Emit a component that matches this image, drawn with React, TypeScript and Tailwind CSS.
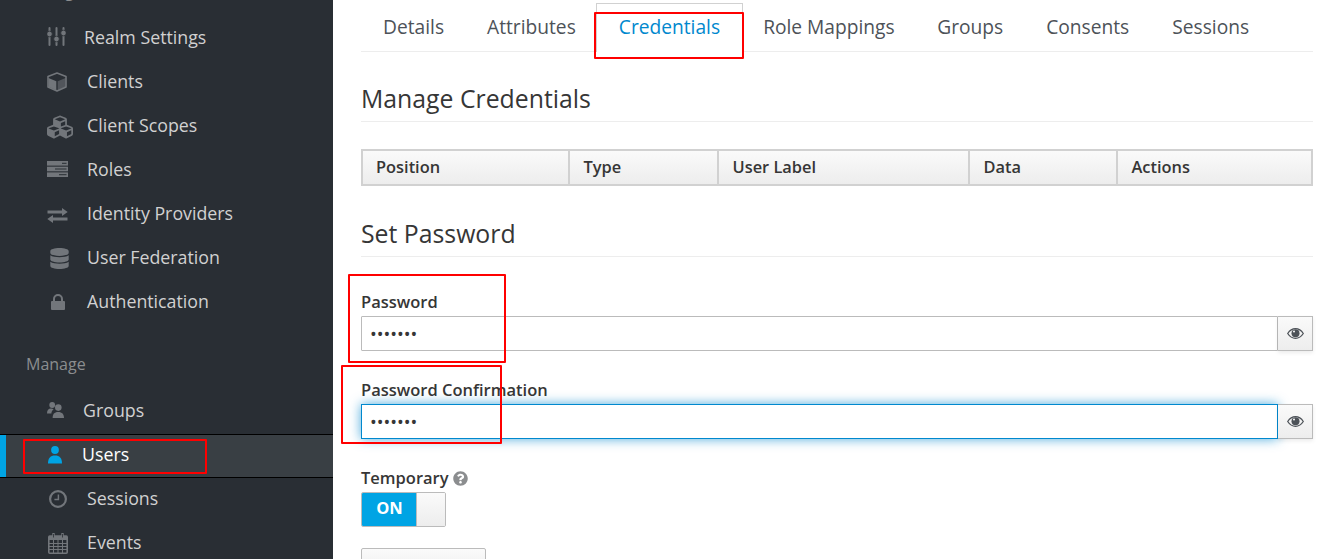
import React from "react";
import { FaCubes, FaDatabase, FaQuestionCircle } from "react-icons/fa";

const G = "#72767b";
const BG = "#292e34";

function SlidersIcon() {
  return (
    <svg width="19" height="19" viewBox="0 0 19 19" className="-mt-[1px]">
      <g stroke={G} strokeWidth="2" strokeLinecap="round">
        <line x1="2.5" y1="1" x2="2.5" y2="18" />
        <line x1="9.5" y1="1" x2="9.5" y2="18" />
        <line x1="16.5" y1="1" x2="16.5" y2="18" />
      </g>
      <g fill={G} stroke={BG} strokeWidth="0.8">
        <circle cx="2.5" cy="7" r="2.8" />
        <circle cx="9.5" cy="12" r="2.8" />
        <circle cx="16.5" cy="6" r="2.8" />
      </g>
    </svg>
  );
}

function CubeIcon() {
  return (
    <svg width="20" height="20" viewBox="0 0 20 20" className="mt-[1px]">
      <path d="M10 1 L19 4.5 V15 L10 19 L1 15 V4.5 Z" fill={BG} stroke={G} strokeWidth="1.6" strokeLinejoin="round" />
      <path d="M1.5 6 L9.3 9.2 V18.3 L1.5 14.7 Z" fill={G} />
      <path d="M10.7 9.2 L18.5 6 V14.7 L10.7 18.3 Z" fill={G} fillOpacity="0.55" />
    </svg>
  );
}

function RolesIcon() {
  return (
    <svg width="21" height="16" viewBox="0 0 21 16">
      <rect x="0" y="0" width="21" height="4.6" fill={G} />
      <rect x="0" y="5.7" width="21" height="4.6" fill={G} />
      <rect x="0" y="11.4" width="21" height="4.6" fill={G} />
      <rect x="15" y="1.8" width="4.5" height="1" fill={BG} />
      <rect x="8" y="7.5" width="11.5" height="1" fill={BG} />
      <rect x="12" y="13.2" width="7.5" height="1" fill={BG} />
    </svg>
  );
}

function ExchangeIcon() {
  return (
    <svg width="21" height="15" viewBox="0 0 21 15" className="mt-[5px]">
      <path d="M0.5 2.6 H15 V0 L20.7 4 L15 8 V5.4 H0.5 Z" fill={G} />
      <path d="M20.5 9.6 H6 V7 L0.3 11 L6 15 V12.4 H20.5 Z" fill={G} />
    </svg>
  );
}

function LockIcon() {
  return (
    <svg width="14" height="16" viewBox="0 0 14 16" className="mt-[2px]">
      <rect x="0" y="7" width="14" height="9" rx="1" fill={G} />
      <path d="M3 7.5 V5 a4 4 0 0 1 8 0 V7.5" fill="none" stroke={G} strokeWidth="2" />
    </svg>
  );
}

function GroupsIcon() {
  return (
    <svg width="17" height="16" viewBox="0 0 17 16">
      <circle cx="5.2" cy="3" r="2.9" fill={G} />
      <path d="M0 11.5 C0 8 1.5 6.5 4 6.5 C5 6.5 6 6.8 6.6 7.3 C5 8.6 4.5 10 4.4 11.5 Z" fill={G} />
      <circle cx="11.3" cy="5.6" r="3.3" fill={G} />
      <path d="M5.6 16 C5.6 12 7.2 9.9 11.2 9.9 C15.2 9.9 16.9 12 17 16 Z" fill={G} />
    </svg>
  );
}

function UserIcon() {
  return (
    <svg width="14" height="18" viewBox="0 0 14 18">
      <circle cx="7" cy="4" r="3.9" fill="#00a4e4" />
      <path d="M0 17.5 C0 12 2.5 9.5 7 9.5 C11.5 9.5 14 12 14 17.5 Z" fill="#00a4e4" />
    </svg>
  );
}

function ClockIcon() {
  return (
    <svg width="18" height="18" viewBox="0 0 18 18" className="mt-[2px]">
      <circle cx="9" cy="9" r="7.9" fill="none" stroke={G} strokeWidth="2.2" />
      <path d="M9.4 4.4 V9.6 H5.4" fill="none" stroke={G} strokeWidth="1.5" />
    </svg>
  );
}

function CalendarIcon() {
  return (
    <svg width="20" height="21" viewBox="0 0 20 21" className="mt-[2px]">
      <rect x="0.8" y="3" width="18.4" height="17.2" rx="1" fill={BG} stroke={G} strokeWidth="1.6" />
      <rect x="1" y="3" width="18" height="4" fill={G} />
      <path d="M1 10.5 H19 M1 13.5 H19 M1 16.5 H19 M5.5 7 V20 M10 7 V20 M14.5 7 V20" stroke={G} strokeWidth="1" />
      <path d="M5.5 0.5 V5 M14.5 0.5 V5" stroke={G} strokeWidth="2.4" strokeLinecap="round" />
      <path d="M5.5 1 V4.5 M14.5 1 V4.5" stroke={BG} strokeWidth="0.8" />
    </svg>
  );
}

function EyeIcon() {
  return (
    <svg width="17" height="11" viewBox="0 0 17 11">
      <path d="M0.7 5.5 C3 2 5.5 0.7 8.5 0.7 C11.5 0.7 14 2 16.3 5.5 C14 9 11.5 10.3 8.5 10.3 C5.5 10.3 3 9 0.7 5.5 Z" fill="none" stroke="#4d5258" strokeWidth="1.3" />
      <circle cx="8.5" cy="5.2" r="4" fill="#4d5258" />
      <circle cx="7" cy="3.6" r="1" fill="#fafafa" />
    </svg>
  );
}

type Item = { label: string; icon: React.ReactNode; width: string };

const configure: Item[] = [
  { label: "Realm Settings", icon: <SlidersIcon />, width: "w-[37px]" },
  { label: "Clients", icon: <CubeIcon />, width: "w-[40px]" },
  { label: "Client Scopes", icon: <FaCubes className="mt-[3px] text-[26px] text-[#72767b]" />, width: "w-[40px]" },
  { label: "Roles", icon: <RolesIcon />, width: "w-[40px]" },
  { label: "Identity Providers", icon: <ExchangeIcon />, width: "w-[40px]" },
  { label: "User Federation", icon: <FaDatabase className="ml-[2px] mt-[3px] text-[21px] text-[#72767b]" />, width: "w-[40px]" },
  { label: "Authentication", icon: <span className="ml-[4px] flex"><LockIcon /></span>, width: "w-[40px]" },
];

function NavItem({ item }: { item: Item }) {
  return (
    <div className="flex h-[44px] items-center pl-[47px] text-[17.8px] text-[#d1d1d1]">
      <span className={`flex shrink-0 items-center ${item.width}`}>{item.icon}</span>
      {item.label}
    </div>
  );
}

const columns = [
  ["Position", "w-[205px]"],
  ["Type", "w-[149px]"],
  ["User Label", "w-[251px]"],
  ["Data", "w-[148px]"],
  ["Actions", "flex-1"],
];

function PasswordRow({ focused }: { focused?: boolean }) {
  return (
    <div className="flex h-[35px]">
      <input
        type="password"
        readOnly
        defaultValue="1234567"
        className={
          focused
            ? "h-full flex-1 border border-[#0088ce] px-2 text-[18px] text-[#363636] outline-none shadow-[0_0_12px_rgba(0,136,206,0.7)]"
            : "h-full flex-1 rounded-l-[1px] border border-[#bbb] px-2 text-[18px] text-[#363636] outline-none"
        }
      />
      <button className="flex h-full w-[35px] items-center justify-center border border-l-0 border-[#bbb] bg-gradient-to-b from-[#fafafa] to-[#ededed] shadow-[0_2px_4px_rgba(0,0,0,0.08)]">
        <EyeIcon />
      </button>
    </div>
  );
}

export default function App() {
  return (
    <div className="relative flex h-[559px] w-full overflow-hidden bg-white font-['Open_Sans',sans-serif] text-[#363636]">
      <aside className="w-[333px] shrink-0 bg-[#292e34] -mt-[21px] h-[580px] overflow-hidden">
        <div className="flex h-[24px] items-center pl-[26px] text-[16px] text-[#8b8d8f]">Configure</div>
        <div className="mt-[12px]">
          {configure.map((item) => (
            <NavItem key={item.label} item={item} />
          ))}
        </div>
        <div className="mt-[29px] flex h-[24px] items-center pl-[26px] text-[16px] text-[#8b8d8f]">Manage</div>
        <div className="mt-[12px]">
          <NavItem item={{ label: "Groups", icon: <GroupsIcon />, width: "w-[36px]" }} />
          <div className="relative -mb-[2px] mt-[2px] flex h-[44px] items-center border-y border-black bg-[#393f44] pb-[3px] pl-[48px] text-[17.8px] text-white shadow-[inset_6px_0_0_#00a4e4]">
            <span className="flex w-[34px] shrink-0 items-center">
              <UserIcon />
            </span>
            Users
          </div>
          <NavItem item={{ label: "Sessions", icon: <span className="ml-[2px] flex"><ClockIcon /></span>, width: "w-[40px]" }} />
          <NavItem item={{ label: "Events", icon: <span className="ml-[1px] flex"><CalendarIcon /></span>, width: "w-[40px]" }} />
        </div>
      </aside>

      <main className="min-w-0 flex-1 pl-[28px] pr-[27px] pt-[3px]">
        <nav className="flex h-[49px] border-b border-[#ededed] text-[19.2px] text-[#4d5258]">
          <span className="pl-[22px] pr-[21.5px] pt-[10px]">Details</span>
          <span className="px-[21.5px] pt-[10px]">Attributes</span>
          <span className="-ml-[1.5px] h-[49px] border border-b-0 border-[#d1d1d1] bg-white px-[22px] pt-[9px] text-[#0088ce]">Credentials</span>
          <span className="pl-[20px] pr-[21px] pt-[10px]">Role Mappings</span>
          <span className="px-[21.5px] pt-[10px]">Groups</span>
          <span className="px-[21.5px] pt-[10px]">Consents</span>
          <span className="px-[21.5px] pt-[10px]">Sessions</span>
        </nav>

        <h2 className="mt-[28px] border-b border-[#ededed] pb-[5px] text-[24.8px] leading-[36px]">Manage Credentials</h2>

        <div className="mt-[27px] flex h-[37px] border-2 border-[#d1d1d1] bg-gradient-to-b from-[#fafafa] to-[#ededed] text-[16.4px] font-semibold">
          {columns.map(([name, width], i) => (
            <div key={name} className={`flex items-center ${i === 0 ? "pl-[13px]" : "border-l-2 border-[#d1d1d1] pl-[13.5px]"} ${width}`}>
              {name}
            </div>
          ))}
        </div>

        <h2 className="mt-[29px] border-b border-[#ededed] pb-[5px] text-[24.8px] leading-[36px]">Set Password</h2>

        <label className="mt-[32px] block -translate-y-[1px] text-[16.5px] font-semibold leading-[27px]">Password</label>
        <PasswordRow />

        <label className="mt-[26px] block -translate-y-[1px] text-[16.5px] font-semibold leading-[27px]">Password Confirmation</label>
        <PasswordRow focused />

        <label className="mt-[26px] flex h-[27px] items-center text-[16.5px] font-semibold">
          Temporary
          <FaQuestionCircle className="ml-[4px] text-[15px] text-[#8b8d8f]" />
        </label>
        <div className="flex h-[35px] w-[85px] overflow-hidden rounded-[2px] border border-[#bbb]">
          <div className="flex w-[54px] items-center justify-center bg-[#00a4e4] pb-[2px] pl-[1px] text-[16.5px] font-bold text-white">ON</div>
          <div className="flex-1 border-l border-[#bbb] bg-gradient-to-b from-[#fafafa] to-[#ededed]" />
        </div>
        <div className="mt-[21px] h-[30px] w-[125px] rounded-[2px] border border-[#bbb] bg-gradient-to-b from-[#fafafa] to-[#ededed]" />
      </main>

      <div className="pointer-events-none absolute left-[594px] top-[12px] h-[47px] w-[150px] rounded-[1px] border-2 border-[#f00]" />
      <div className="pointer-events-none absolute left-[348px] top-[274px] h-[89px] w-[158px] rounded-[1px] border-2 border-[#f00]" />
      <div className="pointer-events-none absolute left-[341px] top-[365px] h-[79px] w-[161px] rounded-[1px] border-2 border-[#f00]" />
      <div className="pointer-events-none absolute left-[23px] top-[439px] h-[35px] w-[184px] rounded-[1px] border-2 border-[#f00]" />
    </div>
  );
}
